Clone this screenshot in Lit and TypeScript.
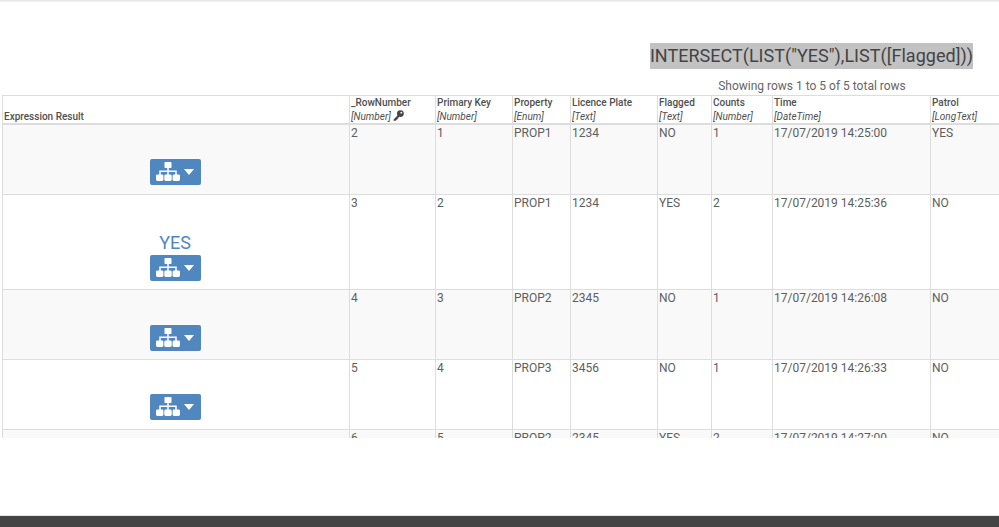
import { LitElement, html, css, svg } from "lit";
import { customElement } from "lit/decorators.js";

const cols = [
  { n: "_RowNumber", t: "Number", key: true },
  { n: "Primary Key", t: "Number" },
  { n: "Property", t: "Enum" },
  { n: "Licence Plate", t: "Text" },
  { n: "Flagged", t: "Text" },
  { n: "Counts", t: "Number" },
  { n: "Time", t: "DateTime" },
  { n: "Patrol", t: "LongText" },
];
const rows = [
  { r: "", h: "r1", c: ["2", "1", "PROP1", "1234", "NO", "1", "17/07/2019 14:25:00", "YES"] },
  { r: "YES", h: "r2", c: ["3", "2", "PROP1", "1234", "YES", "2", "17/07/2019 14:25:36", "NO"] },
  { r: "", h: "r1 r3", c: ["4", "3", "PROP2", "2345", "NO", "1", "17/07/2019 14:26:08", "NO"] },
  { r: "", h: "r1", c: ["5", "4", "PROP3", "3456", "NO", "1", "17/07/2019 14:26:33", "NO"] },
  { r: "", h: "r1", c: ["6", "5", "PROP2", "2345", "YES", "2", "17/07/2019 14:27:00", "NO"] },
];

const sitemap = svg`<svg class="tree" viewBox="0 0 24 19" width="24" height="19" aria-hidden="true">
  <rect x="8.5" y="0" width="7" height="6" rx="0.8" fill="#fff"/>
  <path d="M12 6v7M4 13V9.2h16V13" stroke="#fff" stroke-width="1.5" fill="none"/>
  <rect x="0" y="12.5" width="7.4" height="6.5" rx="1.4" fill="#fff"/>
  <rect x="8.3" y="12.5" width="7.4" height="6.5" rx="1.4" fill="#fff"/>
  <rect x="16.6" y="12.5" width="7.4" height="6.5" rx="1.4" fill="#fff"/>
</svg>`;

const keyIcon = svg`<svg class="key" viewBox="0 0 11 11" width="11" height="11" aria-hidden="true">
  <circle cx="7.4" cy="3.6" r="3.4" fill="#444"/>
  <circle cx="8.3" cy="2.7" r="0.9" fill="#fff"/>
  <path d="M5.4 4.6L0.6 9.4v1.3h2.2l.5-.9h1v-1l.9-.3 1-2.4z" fill="#444"/>
</svg>`;

@customElement("app-root")
export class AppRoot extends LitElement {
  static styles = css`
    :host {
      display: flex;
      flex-direction: column;
      width: 999px;
      height: 527px;
      overflow: hidden;
      background: #fff;
      font-family: Roboto, "Liberation Sans", sans-serif;
      color: #5e5e5e;
    }
    .topbar {
      height: 2px;
      flex: none;
      background: linear-gradient(#e2e2e2, #f6f6f6);
    }
    .main {
      flex: none;
      height: 436px;
      overflow: hidden;
      padding-top: 41px;
      box-sizing: border-box;
    }
    .title-row {
      display: flex;
      justify-content: flex-end;
      padding-right: 26px;
      height: 26px;
    }
    .title {
      background: #c2c2c2;
      color: #444;
      font-size: 18px;
      line-height: 26px;
      white-space: nowrap;
      letter-spacing: 0.02px;
    }
    .count {
      height: 26px;
      box-sizing: border-box;
      padding: 9px 0 0 625px;
      font-size: 12px;
      line-height: 16px;
      text-align: center;
      width: 999px;
      color: #666;
    }
    .wrap {
      padding-left: 2px;
    }
    table {
      border-collapse: collapse;
      table-layout: fixed;
      width: 1010px;
      font-size: 12px;
      line-height: 14px;
    }
    th, td {
      border: 1px solid #ddd;
      padding: 1px 1px;
      vertical-align: top;
      text-align: left;
      font-weight: 400;
      box-sizing: border-box;
    }
    thead th {
      vertical-align: bottom;
      border-bottom: 2px solid #ddd;
      font-size: 10px;
      line-height: 13.5px;
      padding: 0 1px;
      color: #505050;
      font-weight: 500;
    }
    .type {
      display: block;
      font-style: italic;
      font-weight: 400;
    }
    .key {
      vertical-align: -1px;
    }
    tbody tr:nth-child(odd) {
      background: #f9f9f9;
    }
    tr.r1 { height: 70px; }
    tr.r2 { height: 95px; }
    .c0 { width: 347px; }
    .c1 { width: 86px; }
    .c2 { width: 77px; }
    .c3 { width: 58px; }
    .c4 { width: 87px; }
    .c5 { width: 54px; }
    .c6 { width: 61px; }
    .c7 { width: 158px; }
    .c8 { width: 82px; }
    td.res {
      text-align: center;
      vertical-align: bottom;
      padding: 0 2px 1px 0;
      color: #5087bf;
      font-size: 18px;
      line-height: 24px;
    }
    .res-text {
      display: block;
      height: 24px;
      margin-top: 2px;
    }
    .btn {
      display: inline-flex;
      align-items: flex-start;
      justify-content: center;
      gap: 4px;
      width: 51px;
      height: 26px;
      box-sizing: border-box;
      background: #5087bf;
      border-radius: 2px;
      padding: 3px 0 0;
      margin: 0 0 8px;
      vertical-align: top;
      border: 0;
    }
    .r2 .btn, .r3 .btn {
      margin-bottom: 7px;
    }
    .caret {
      width: 0;
      height: 0;
      border-left: 5.5px solid transparent;
      border-right: 5.5px solid transparent;
      border-top: 6px solid #fff;
      margin-top: 7px;
    }
    .tree { display: block; }
    .spacer { flex: 1; }
    .footer {
      flex: none;
      height: 11px;
      background: #444;
      box-shadow: 0 -1px 0 #e6e6e6;
    }
  `;

  render() {
    return html`
      <div class="topbar"></div>
      <div class="main">
        <div class="title-row"><span class="title">INTERSECT(LIST("YES"),LIST([Flagged]))</span></div>
        <div class="count">Showing rows 1 to 5 of 5 total rows</div>
        <div class="wrap">
          <table>
            <colgroup>
              ${[0, 1, 2, 3, 4, 5, 6, 7, 8].map((i) => html`<col class="c${i}" />`)}
            </colgroup>
            <thead>
              <tr>
                <th>Expression Result</th>
                ${cols.map(
                  (c) => html`<th>${c.n}<span class="type">[${c.t}]${c.key ? html` ${keyIcon}` : ""}</span></th>`
                )}
              </tr>
            </thead>
            <tbody>
              ${rows.map(
                (r) => html`<tr class=${r.h}>
                  <td class="res">
                    ${r.r ? html`<span class="res-text">${r.r}</span>` : ""}
                    <button class="btn">${sitemap}<span class="caret"></span></button>
                  </td>
                  ${r.c.map((v) => html`<td>${v}</td>`)}
                </tr>`
              )}
            </tbody>
          </table>
        </div>
      </div>
      <div class="spacer"></div>
      <div class="footer"></div>
    `;
  }
}
